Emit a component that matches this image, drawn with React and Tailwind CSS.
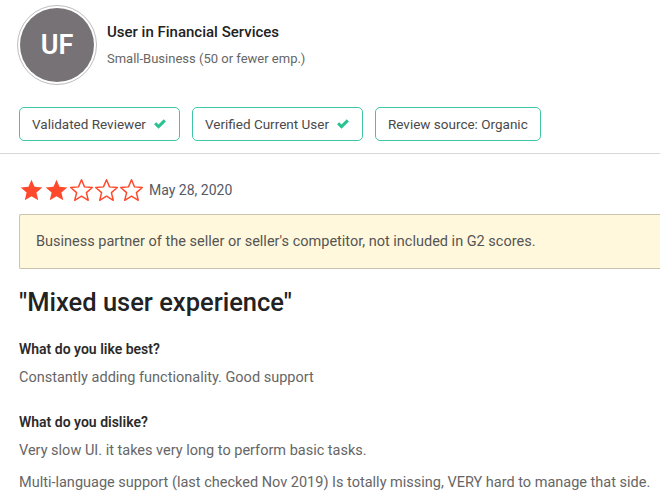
import React from 'react';

const font = { fontFamily: 'Roboto, "Liberation Sans", sans-serif' };

const Check = () => (
  <svg viewBox="0 0 16 16" className="h-[14px] w-[14px]" fill="#27c28f">
    <path d="M1.2 8.4l2.4-2.4 2.7 2.7 6-6 2.4 2.4-8.4 8.4z" />
  </svg>
);

const Star = ({ filled }) => (
  <svg viewBox="0 0 24 24" className="h-[25px] w-[25px]">
    <path
      d="M12 1.6l2.9 6.9 7.5.6-5.7 4.9 1.8 7.4L12 17.5l-6.5 3.9 1.8-7.4-5.7-4.9 7.5-.6z"
      fill={filled ? '#ff492c' : 'none'}
      stroke="#ff492c"
      strokeWidth={filled ? 0 : 1.4}
      strokeLinejoin="round"
    />
  </svg>
);

const Badge = ({ label, check }) => (
  <div className="flex h-[34px] items-center gap-[7px] rounded-[5px] border border-[#3fc7a6] px-[12px] text-[13.5px] text-[#4a4a4a]">
    <span>{label}</span>
    {check && <Check />}
  </div>
);

export default function App() {
  const stars = [true, true, false, false, false];
  return (
    <div className="w-[660px] h-[500px] overflow-hidden bg-white" style={font}>
      <div className="flex items-center gap-[10px] pl-[17px] pt-[5px]">
        <div className="flex h-[80px] w-[80px] items-center justify-center rounded-full border border-[#bdbdbd] bg-white">
          <div className="flex h-[74px] w-[74px] items-center justify-center rounded-full bg-[#767276]">
            <span className="text-[27px] font-semibold text-white">UF</span>
          </div>
        </div>
        <div className="flex flex-col gap-[6px] pb-[1px]">
          <div className="text-[15px] font-medium text-[#222]">User in Financial Services</div>
          <div className="text-[13px] text-[#666]">Small-Business (50 or fewer emp.)</div>
        </div>
      </div>

      <div className="mt-[22px] flex gap-[12px] pl-[19px]">
        <Badge label="Validated Reviewer" check />
        <Badge label="Verified Current User" check />
        <Badge label="Review source: Organic" />
      </div>

      <div className="mt-[12px] h-px bg-[#d8d8d8]" />

      <div className="pl-[19px]">
        <div className="mt-[24px] flex items-center gap-[5px]">
          <div className="flex">
            {stars.map((f, i) => (
              <Star key={i} filled={f} />
            ))}
          </div>
          <span className="text-[14px] text-[#555a66]">May 28, 2020</span>
        </div>

        <div className="mt-[11px] flex h-[55px] items-center rounded-l-[2px] border border-r-0 border-[#c9c3b0] bg-[#fff8dc] pl-[16px] text-[14.5px] text-[#555]">
          Business partner of the seller or seller's competitor, not included in G2 scores.
        </div>

        <h1 className="mt-[17px] text-[25.5px] font-medium leading-[32px] text-[#222]">"Mixed user experience"</h1>

        <div className="mt-[21px] text-[14px] font-semibold text-[#2b2b2b]">What do you like best?</div>
        <div className="mt-[7px] text-[14.5px] text-[#666]">Constantly adding functionality. Good support</div>

        <div className="mt-[23px] text-[14px] font-semibold text-[#2b2b2b]">What do you dislike?</div>
        <div className="mt-[7px] text-[14.5px] text-[#666]">Very slow UI. it takes very long to perform basic tasks.</div>
        <div className="mt-[10px] text-[14.5px] text-[#666]">
          Multi-language support (last checked Nov 2019) Is totally missing, VERY hard to manage that side.
        </div>
      </div>
    </div>
  );
}
